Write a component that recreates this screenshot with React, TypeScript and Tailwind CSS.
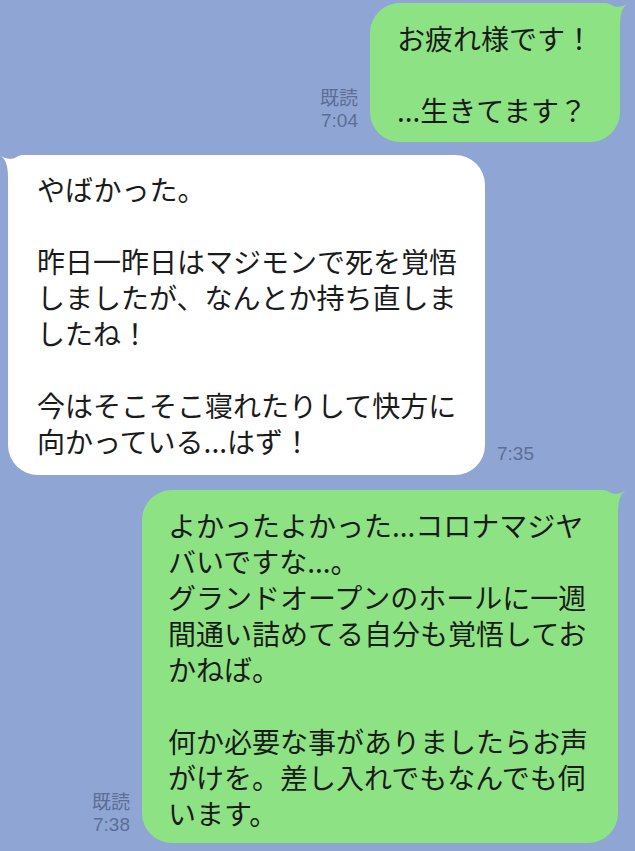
import React from 'react';

const jp = { fontFamily: '"Noto Sans CJK JP", "Noto Sans", sans-serif' };
const meta = { fontFamily: '"Liberation Sans", "Noto Sans CJK JP", sans-serif' };

function TailRight({ fill }: { fill: string }) {
  return (
    <svg className="absolute top-0 -right-[8px]" width="24" height="26" viewBox="0 0 24 26">
      <path d="M2 0.5 Q14 7 23.5 1 Q16 5 16 22 L2 22 Z" fill={fill} />
    </svg>
  );
}

function TailLeft({ fill }: { fill: string }) {
  return (
    <svg className="absolute top-0 -left-[8px]" width="24" height="26" viewBox="0 0 24 26">
      <path d="M22 0.5 Q10 7 0.5 1 Q8 5 8 22 L22 22 Z" fill={fill} />
    </svg>
  );
}

// "..." は iPhone 表示に合わせてベースライン上の三点にする
function Lines({ lines }: { lines: string[] }) {
  return (
    <div className="text-[28px] leading-[36px] text-[#1b1b1b] whitespace-nowrap" style={jp}>
      {lines.map((l, i) => (
        <div key={i} className="h-[36px]">{l || '\u00a0'}</div>
      ))}
    </div>
  );
}

function Meta({ read, time, align }: { read?: boolean; time: string; align: 'left' | 'right' }) {
  return (
    <div className={`text-[19px] leading-[22px] text-[#5d6d95] ${align === 'right' ? 'text-right' : 'text-left'}`} style={meta}>
      {read && <div>既読</div>}
      <div>{time}</div>
    </div>
  );
}

export default function App() {
  return (
    <div className="w-[635px] h-[851px] bg-[#8fa6d5] overflow-hidden flex flex-col">
      {/* 1 */}
      <div className="flex justify-end items-end gap-[12px] pr-[15px] mt-[3px]">
        <div className="mb-[10px]">
          <Meta read time="7:04" align="right" />
        </div>
        <div className="relative bg-[#8de384] rounded-[30px] rounded-tr-[16px] w-[250px] pl-[27px] pt-[17px] pb-[14px]">
          <TailRight fill="#8de384" />
          <Lines lines={['お疲れ様です！', '', '...生きてます？']} />
        </div>
      </div>

      {/* 2 */}
      <div className="flex items-end gap-[12px] pl-[8px] mt-[13px]">
        <div className="relative bg-white rounded-[30px] rounded-tl-[16px] w-[477px] pl-[29px] pt-[16px] pb-[16px]">
          <TailLeft fill="#ffffff" />
          <Lines
            lines={[
              'やばかった。',
              '',
              '昨日一昨日はマジモンで死を覚悟',
              'しましたが、なんとか持ち直しま',
              'したね！',
              '',
              '今はそこそこ寝れたりして快方に',
              '向かっている...はず！',
            ]}
          />
        </div>
        <div className="mb-[10px]">
          <Meta time="7:35" align="left" />
        </div>
      </div>

      {/* 3 */}
      <div className="flex justify-end items-end gap-[12px] pr-[17px] mt-[15px]">
        <div className="mb-[7px]">
          <Meta read time="7:38" align="right" />
        </div>
        <div className="relative bg-[#8de384] rounded-[30px] rounded-tr-[16px] w-[476px] pl-[26px] pt-[17px] pb-[12px]">
          <TailRight fill="#8de384" />
          <Lines
            lines={[
              'よかったよかった...コロナマジヤ',
              'バいですな...。',
              'グランドオープンのホールに一週',
              '間通い詰めてる自分も覚悟してお',
              'かねば。',
              '',
              '何か必要な事がありましたらお声',
              'がけを。差し入れでもなんでも伺',
              'います。',
            ]}
          />
        </div>
      </div>
    </div>
  );
}
